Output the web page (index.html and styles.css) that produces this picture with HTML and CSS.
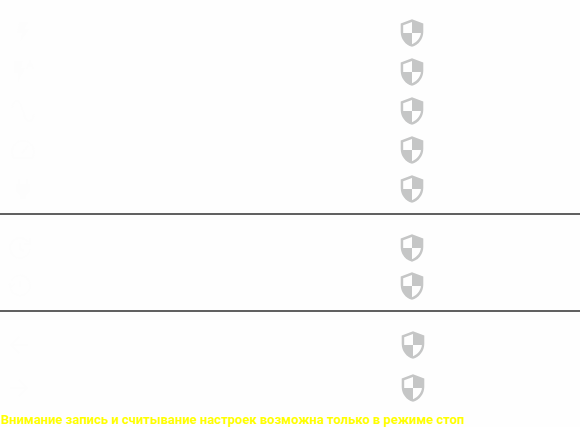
FILE: index.html
```html
<!DOCTYPE html>
<html lang="ru">
<head>
<meta charset="utf-8">
<title>Настройки</title>
<link rel="stylesheet" href="styles.css">
</head>
<body>
<svg class="defs" aria-hidden="true">
  <symbol id="shield" viewBox="0 0 24 28">
    <path fill="currentColor" fill-rule="evenodd" d="M12 .3L23.3 4.400V13C23.3 20 18.500 26 12 27.800C5.500 26 .7 20 .7 13V4.400ZM12 3L3.200 6.300V14H12ZM12 14V25.200C17 23.200 20.600 18.500 20.900 14Z"/>
  </symbol>
</svg>
<main>
  <ul class="group">
    <li class="row"><svg class="icon" viewBox="0 0 24 24"><path class="solid" d="M8 1h9l-3 7h4l-9 14 2-10H6z"/></svg><svg class="shield"><use href="#shield"/></svg></li>
    <li class="row"><svg class="icon" viewBox="0 0 24 24"><path class="solid" d="M3 1h9l-2 7h4L7 23V13H3z"/><path d="M16 9l3-8 3 8M17 6h4"/></svg><svg class="shield"><use href="#shield"/></svg></li>
    <li class="row"><svg class="icon" viewBox="0 0 24 24"><path d="M1 9C3-1 9-1 12 12s9 13 11 3"/></svg><svg class="shield"><use href="#shield"/></svg></li>
    <li class="row"><svg class="icon" viewBox="0 0 24 24"><path d="M3 20a11 11 0 1 1 18 0zM11 15l6-7"/></svg><svg class="shield"><use href="#shield"/></svg></li>
    <li class="row"><svg class="icon" viewBox="0 0 24 24"><path class="solid" d="M7 2h2v5h6V2h2v5h2v8l-4 4v3H9v-3l-4-4V7h2z"/></svg><svg class="shield"><use href="#shield"/></svg></li>
  </ul>
  <ul class="group clocks">
    <li class="row"><svg class="icon" viewBox="0 0 24 24"><path d="M20 6a10 10 0 1 0 2 7M22 2v6h-6M12 7v6l4 2"/></svg><svg class="shield"><use href="#shield"/></svg></li>
    <li class="row"><svg class="icon" viewBox="0 0 24 24"><path d="M3 7a10 10 0 1 1-1 5M1 9l2 4 4-3M12 7v6"/></svg><svg class="shield"><use href="#shield"/></svg></li>
  </ul>
  <ul class="group transfer">
    <li class="row"><svg class="icon" viewBox="0 0 24 24"><path d="M20 12H3m8-8-8 8 8 8"/></svg><svg class="shield"><use href="#shield"/></svg></li>
    <li class="row"><svg class="icon" viewBox="0 0 24 24"><path d="M2 12h17m-8-8 8 8-8 8"/></svg><svg class="shield"><use href="#shield"/></svg></li>
  </ul>
  <p class="notice">Внимание запись и считывание настроек возможна только в режиме стоп</p>
</main>
</body>
</html>
```
FILE: styles.css
```css
body {
  margin: 0;
  background: #fefefe;
  font-family: Roboto, "Liberation Sans", sans-serif;
}

.defs {
  display: none;
}

.group {
  display: grid;
  gap: 11px;
  margin: 0;
  padding: 19px 0 10px;
  list-style: none;
  border-bottom: 2px solid #616161;
}

.clocks {
  gap: 10px;
}

.transfer {
  gap: 15px;
  padding-bottom: 8px;
  border-bottom: 0;
}

.row {
  display: grid;
  grid-template-columns: 400px 24px;
  align-items: center;
}

.transfer .row {
  grid-template-columns: 401px 24px;
}

.icon {
  width: 24px;
  height: 24px;
  margin-left: 11px;
  fill: none;
  stroke: #fdfdfd;
  stroke-width: 2;
}

.clocks .icon,
.transfer .icon {
  margin-left: 8px;
}

.solid {
  fill: #fdfdfd;
  stroke: none;
}

.shield {
  width: 24px;
  height: 28px;
  color: #c5c6c6;
}

.notice {
  margin: 0;
  padding-left: 1px;
  font-size: 13px;
  font-weight: 700;
  line-height: 20px;
  color: #ffff00;
}
```
